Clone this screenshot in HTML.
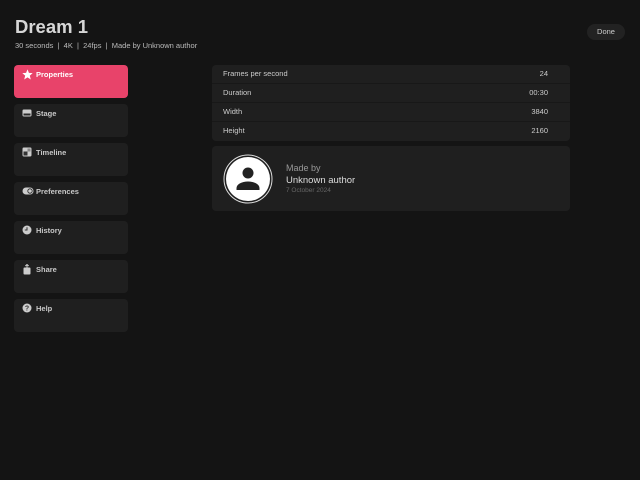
<!DOCTYPE html>
<html><head><style>
*{margin:0;padding:0;box-sizing:border-box}
body{width:640px;height:480px;background:#141414;font-family:"Liberation Sans",sans-serif;color:#ddd;position:relative;overflow:hidden}
.t{position:absolute;left:15px;top:16px;font-size:18.5px;font-weight:bold;color:#d6d6d6}
.s{position:absolute;left:15px;top:41px;font-size:7.5px;color:#bbb}
.done{position:absolute;left:587px;top:24px;width:38px;height:16px;border-radius:8px;background:#222;color:#ccc;font-size:7.5px;text-align:center;line-height:16px}
.card{position:absolute;left:14px;width:114px;height:33px;border-radius:4px;background:#1f1f1f;font-size:7.5px;font-weight:bold;color:#c8c8c8}
.card span{position:absolute;left:22px;top:5px}
.card svg{position:absolute;left:8px;top:4px}
.pk{background:#e8436a;color:#fff}
.tbl{position:absolute;left:212px;top:65px;width:358px;height:76px;border-radius:4px;background:#1f1f1f}
.row{height:19px;border-bottom:1px solid #181818;font-size:7.5px;color:#ccc;line-height:18px;padding:0 22px 0 11px;display:flex;justify-content:space-between}
.row:last-child{border:none}
.au{position:absolute;left:212px;top:146px;width:358px;height:65px;border-radius:4px;background:#1f1f1f}
</style></head><body>
<div class="t">Dream 1</div>
<div class="s">30 seconds &nbsp;|&nbsp; 4K &nbsp;|&nbsp; 24fps &nbsp;|&nbsp; Made by Unknown author</div>
<div class="done">Done</div>
<div class="card pk" style="top:65px"><svg width="11" height="11" viewBox="0 0 10 10"><path d="M5 0.3L6.3 3.5 9.7 3.7 7.1 6 8 9.5 5 7.6 2 9.5 2.9 6 0.3 3.7 3.7 3.5Z" fill="#fff"/></svg><span>Properties</span></div>
<div class="card" style="top:104px"><svg width="10" height="10" viewBox="0 0 10 10"><rect x="0.5" y="1.5" width="9" height="7" rx="1.2" fill="#ccc"/><rect x="1.5" y="5.5" width="7" height="2" fill="#2a2a2a"/></svg><span>Stage</span></div>
<div class="card" style="top:143px"><svg width="10" height="10" viewBox="0 0 10 10"><rect x="0.5" y="0.5" width="9" height="9" rx="1.2" fill="#ccc"/><rect x="1.5" y="4.5" width="4" height="4" fill="#333"/><rect x="5.5" y="1.5" width="3" height="3" fill="#888"/></svg><span>Timeline</span></div>
<div class="card" style="top:182px"><svg width="12" height="10" viewBox="0 0 12 10"><rect x="0.5" y="1.5" width="11" height="7" rx="3.5" fill="#ccc"/><circle cx="8" cy="5" r="2.6" fill="#1f1f1f"/><circle cx="8" cy="5" r="1.8" fill="#ccc"/></svg><span>Preferences</span></div>
<div class="card" style="top:221px"><svg width="10" height="10" viewBox="0 0 10 10"><circle cx="5" cy="5" r="4.5" fill="#ccc"/><path d="M5 2.3V5H2.8" stroke="#333" fill="none"/></svg><span>History</span></div>
<div class="card" style="top:260px"><svg width="10" height="11" viewBox="0 0 10 11"><rect x="1.5" y="3.5" width="7" height="7" rx="1" fill="#ccc"/><path d="M5 0.5V6M3.3 2L5 0.5 6.7 2" stroke="#ccc" fill="none"/></svg><span>Share</span></div>
<div class="card" style="top:299px"><svg width="10" height="10" viewBox="0 0 10 10"><circle cx="5" cy="5" r="4.5" fill="#ccc"/><text x="5" y="7.5" font-size="7" text-anchor="middle" fill="#333" font-weight="bold" font-family="Liberation Sans">?</text></svg><span>Help</span></div>
<div class="tbl">
<div class="row"><span>Frames per second</span><span>24</span></div>
<div class="row"><span>Duration</span><span>00:30</span></div>
<div class="row"><span>Width</span><span>3840</span></div>
<div class="row"><span>Height</span><span>2160</span></div>
</div>
<div class="au">
<svg style="position:absolute;left:11px;top:8px" width="50" height="50" viewBox="0 0 50 50"><circle cx="25" cy="25" r="24" fill="none" stroke="#ddd" stroke-width="1"/><circle cx="25" cy="25" r="22" fill="#fff"/><circle cx="25" cy="19" r="5.5" fill="#222"/><path d="M13.5 34a11.5 6.5 0 0 1 23 0v2h-23z" fill="#222"/></svg>
<div style="position:absolute;left:74px;top:17px;font-size:9px;color:#999">Made by</div>
<div style="position:absolute;left:74px;top:29px;font-size:9.5px;color:#ddd">Unknown author</div>
<div style="position:absolute;left:74px;top:41px;font-size:6.5px;color:#666">7 October 2024</div>
</div>
</body></html>
